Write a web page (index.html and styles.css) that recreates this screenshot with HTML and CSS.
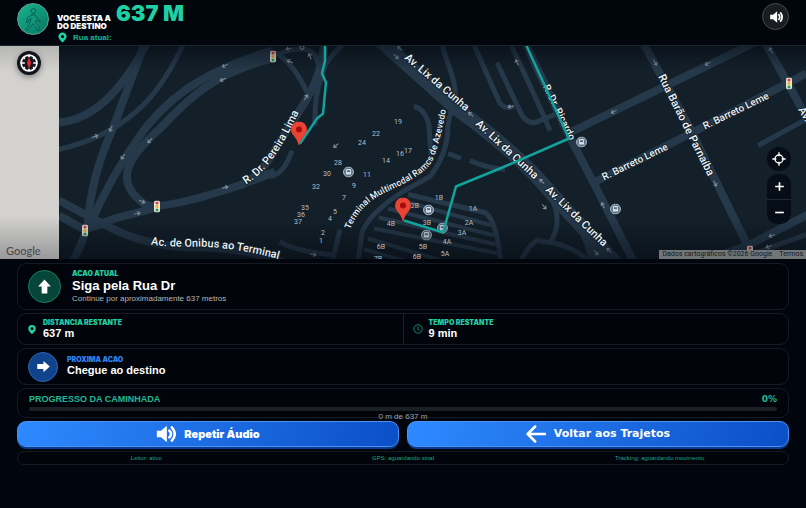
FILE: index.html
```html
<!DOCTYPE html>
<html lang="pt-BR">
<head>
  <meta charset="UTF-8">
  <meta name="viewport" content="width=device-width, initial-scale=1.0">
  <title>Navegação a pé</title>
  <link rel="stylesheet" href="styles.css">
</head>
<body>
  <header class="topbar">
    <div class="avatar">
      <svg viewBox="0 0 32 32" aria-hidden="true">
        <circle cx="16.500" cy="7.500" r="2.600"/>
        <path d="M14 12 L18 11.500 L20.500 15.500 L24 17.500 L23.500 19 L19 17.200 L18.500 20 L21.500 23 L23 28 L21 28.500 L19 24 L15.500 21 L13.500 25 L9.500 28 L8.500 26.500 L11.500 23.500 L14 15.500 L11.500 17 L10.500 20 L9 19.500 L10 15 Z"/>
      </svg>
    </div>
    <div class="heading">
      <div class="heading-main">
        <h1>VOCE ESTA A<br>DO DESTINO</h1>
        <strong class="distance">637 M</strong>
      </div>
      <p class="street">
        <svg class="pin" viewBox="0 0 24 24" aria-hidden="true"><path fill-rule="evenodd" d="M12 1a9 9 0 0 0-9 9c0 6 9 13 9 13s9-7 9-13a9 9 0 0 0-9-9zm0 5.500a3.500 3.500 0 1 1 0 7 3.500 3.500 0 0 1 0-7z"/></svg>
        Rua atual:
      </p>
    </div>
    <button class="sound" type="button" aria-label="Som">
      <svg viewBox="0 0 24 24" aria-hidden="true"><path class="fill" d="M2 8h5l7-6v20l-7-6H2z"/><path class="line" d="M17 8q3 4 0 8M20 5q5 7 0 14"/></svg>
    </button>
  </header>

  <main>
    <section class="map" aria-label="Mapa">
      <svg class="map-canvas" viewBox="0 45 806 214" preserveAspectRatio="xMidYMid slice">
        <defs>
          <symbol id="light" viewBox="0 0 6 12"><rect width="6" height="12" rx="2" fill="#e8e6dc"/><circle cx="3" cy="2.500" r="1.600" fill="#e0453a"/><circle cx="3" cy="6" r="1.600" fill="#f2b32c"/><circle cx="3" cy="9.500" r="1.600" fill="#2f9d58"/></symbol>
          <symbol id="bus" viewBox="0 0 12 12"><circle cx="6" cy="6" r="5.400" fill="#5d7182" stroke="#b7c8d6"/><rect x="3.200" y="2.800" width="5.600" height="6" rx="1" fill="#d5e3ee"/><rect x="4.200" y="4" width="3.600" height="2.200" fill="#5d7182"/></symbol>
          <symbol id="marker" viewBox="0 0 16 24"><path d="M8 0a8 8 0 0 0-8 8c0 6 6 7 7.500 15.500h1C10 15 16 14 16 8a8 8 0 0 0-8-8z" fill="#ea4335"/><circle cx="8" cy="8" r="3" fill="#a50e0e"/></symbol>
          <path id="arrow" d="M-3 0H3M0.500 -2L3 0L0.500 2"/>
          <linearGradient id="shade" x1="0" y1="0" x2="0" y2="1"><stop offset="0" stop-color="#02060e" stop-opacity=".5"/><stop offset=".12" stop-color="#02060e" stop-opacity="0"/><stop offset=".8" stop-color="#02060e" stop-opacity="0"/><stop offset="1" stop-color="#02060e" stop-opacity=".5"/></linearGradient>
          <path id="pereira" d="M246 184Q262 174 275 155T303 103"/>
          <path id="onibus" d="M151 244Q170 247 200 246Q245 248 290 262"/>
          <path id="terminal" d="M350 229Q359 205 385 192Q427 174 433 159Q441 138 447 104"/>
          <path id="lix1" d="M404 58L476 120"/>
          <path id="lix2" d="M475 124L543 187"/>
          <path id="lix3" d="M545 190L612 255"/>
          <path id="ricardo" d="M543 86L576 153"/>
          <path id="barao" d="M658 76L720 200"/>
        </defs>
        <rect y="45" width="806" height="214" fill="#13202a"/>
        <g class="roads">
          <g class="thin">
            <path d="M184 42Q162 90 135 112Q105 138 59 149"/>
            <path d="M442 42C446 65 458 78 455 105Q450 110 448 125Q448 153 430 176L403 191Q370 212 362 232L358 262"/>
            <path d="M414 106Q425 108 429 125L431 155"/>
            <path d="M346 42Q325 58 322 75Q314 95 315 125"/>
            <path d="M275 52Q294 62 309 96M275 55Q305 42 315 55L321 70"/>
            <path d="M473 42L500 103Q505 109 514 106M497 62L522 115Q530 126 540 120L560 112M510 42L540 107L550 130"/>
            <path d="M340 229L332 262M280 241Q292 250 335 255M270 176Q284 174 292 150"/>
            <path d="M408 194L485 212Q496 218 501 262"/>
            <path d="M540 180Q568 215 550 242M540 241Q570 242 590 262M520 262Q530 241 540 239"/>
            <path d="M448 153L461 158M470 160Q485 167 505 169M758 145L806 119M730 262L806 234"/>
          </g>
          <path class="platforms" d="M401 200L492 225M388 208L494 235M379 217L496 244M374 228L498 253M368 238L448 262M364 249L410 262"/>
          <g class="mid">
            <path d="M147 42Q108 118 59 122M145 42L112 130Q91 177 88 222Q84 240 72 262"/>
            <path d="M272 50C190 75 165 105 145 128Q112 173 90 224"/>
            <path d="M272 58C205 75 180 108 160 128C130 155 111 180 145 204Q154 209 200 197Q238 187 275 171M59 215L84 229Q98 225 115 218L157 207"/>
            <path d="M59 200L110 227Q150 248 205 247Q245 248 285 262"/>
            <path d="M324 42Q322 75 304 103L270 157Q258 177 240 185"/>
            <path d="M525 42L570 137L596 187L634 262M643 42L691 130L748 246"/>
            <path d="M755 42L570 132M806 73L720 118L594 182M765 42L810 123"/>
            <path d="M700 262L750 244L810 213"/>
          </g>
          <path class="wide" d="M380 40L455 107Q518 153 548 189Q575 220 616 262"/>
          <path d="M560 200Q580 222 590 262H616Z" class="patch"/>
        </g>
        <g class="arrows">
          <use href="#arrow" transform="translate(225 65) rotate(155)"/><use href="#arrow" transform="translate(223 79) rotate(155)"/>
          <use href="#arrow" transform="translate(111 128) rotate(115)"/><use href="#arrow" transform="translate(95 136) rotate(-18)"/>
          <use href="#arrow" transform="translate(123 156) rotate(125)"/><use href="#arrow" transform="translate(150 140) rotate(135)"/>
          <use href="#arrow" transform="translate(142 201) rotate(25)"/><use href="#arrow" transform="translate(137 213) rotate(-12)"/>
          <use href="#arrow" transform="translate(225 187) rotate(-15)"/><use href="#arrow" transform="translate(289 48) rotate(170)"/>
          <use href="#arrow" transform="translate(290 61) rotate(205)"/><use href="#arrow" transform="translate(310 56) rotate(-115)"/>
          <use href="#arrow" transform="translate(306 97) rotate(-60)"/><use href="#arrow" transform="translate(336 145) rotate(140)"/>
          <use href="#arrow" transform="translate(400 48) rotate(-140)"/><use href="#arrow" transform="translate(396 56) rotate(42)"/>
          <use href="#arrow" transform="translate(471 114) rotate(-140)"/><use href="#arrow" transform="translate(517 62) rotate(-115)"/>
          <use href="#arrow" transform="translate(511 106) rotate(170)"/><use href="#arrow" transform="translate(542 181) rotate(-135)"/>
          <use href="#arrow" transform="translate(544 206) rotate(50)"/><use href="#arrow" transform="translate(596 252) rotate(50)"/>
          <use href="#arrow" transform="translate(609 250) rotate(-135)"/><use href="#arrow" transform="translate(603 205) rotate(-115)"/>
          <use href="#arrow" transform="translate(614 111) rotate(153)"/><use href="#arrow" transform="translate(708 63) rotate(153)"/>
          <use href="#arrow" transform="translate(655 62) rotate(62)"/><use href="#arrow" transform="translate(715 183) rotate(62)"/>
          <use href="#arrow" transform="translate(771 50) rotate(-118)"/><use href="#arrow" transform="translate(772 235) rotate(160)"/>
          <use href="#arrow" transform="translate(769 246) rotate(160)"/><use href="#arrow" transform="translate(313 254) rotate(10)"/>
        </g>
        <use href="#bus" x="343" y="166" width="11" height="11"/><use href="#bus" x="423" y="204" width="11" height="11"/><use href="#bus" x="437" y="222" width="11" height="11"/><use href="#bus" x="421" y="229" width="11" height="11"/><use href="#bus" x="576" y="136" width="11" height="11"/><use href="#bus" x="610" y="203" width="11" height="11"/>
        <use href="#light" x="270" y="50" width="6" height="12"/><use href="#light" x="154" y="200" width="6" height="12"/><use href="#light" x="82" y="224" width="6" height="12"/><use href="#light" x="786" y="77" width="6" height="12"/><use href="#light" x="747" y="245" width="6" height="12"/>
        <circle cx="302" cy="47" r="2" fill="none" stroke="#a9b4bd"/>
        <rect y="45" width="806" height="214" fill="url(#shade)"/>
        <g class="road-names">
          <text><textPath href="#pereira">R. Dr. Pereira Lima</textPath></text>
          <text><textPath href="#onibus">Ac. de Onibus ao Terminal</textPath></text>
          <text class="tiny"><textPath href="#terminal">Terminal Multimodal Ramos de Azevedo</textPath></text>
          <text><textPath href="#lix1">Av. Lix da Cunha</textPath></text>
          <text><textPath href="#lix2">Av. Lix da Cunha</textPath></text>
          <text><textPath href="#lix3">Av. Lix da Cunha</textPath></text>
          <text class="small"><textPath href="#ricardo">R. Dr. Ricardo</textPath></text>
          <text><textPath href="#barao">Rua Barão de Parnaíba</textPath></text>
          <text class="small" transform="translate(604 180) rotate(-26)">R. Barreto Leme</text>
          <text class="small" transform="translate(705 129) rotate(-26)">R. Barreto Leme</text>
          <text transform="translate(798 109) rotate(60)">Av.</text>
        </g>
        <g class="stops">
          <text x="398" y="123">19</text><text x="376" y="135">22</text><text x="362" y="144">24</text><text x="400" y="155">16</text><text x="408" y="152">17</text><text x="386" y="162">14</text><text x="338" y="164">28</text><text x="367" y="176">11</text><text x="327" y="175">30</text><text x="354" y="187">9</text><text x="316" y="188">32</text><text x="344" y="199">7</text><text x="305" y="209">35</text><text x="335" y="213">5</text><text x="301" y="216">36</text><text x="330" y="220">4</text><text x="298" y="223">37</text><text x="323" y="234">2</text><text x="321" y="242">1</text>
          <text x="439" y="199">1B</text><text x="415" y="207">2B</text><text x="427" y="224">3B</text><text x="391" y="225">4B</text><text x="423" y="248">5B</text><text x="381" y="248">6B</text><text x="378" y="260">7B</text><text x="417" y="258">6B</text><text x="473" y="210">1A</text><text x="469" y="224">2A</text><text x="462" y="234">3A</text><text x="447" y="243">4A</text><text x="445" y="255">5A</text>
        </g>
        <path class="route" d="M325 42V60L322 73L326 82L323 113L317 118L300 143M525 42L569 138L500 168L456 186L443 232L404 220"/>
        <use href="#marker" x="291" y="121" width="16" height="24"/><use href="#marker" x="395" y="197" width="16" height="24"/>
      </svg>
      <div class="map-side">
        <button class="round compass" type="button" aria-label="Bússola">
          <svg viewBox="0 0 24 24" aria-hidden="true"><circle cx="12" cy="12" r="9.500"/><path d="M12 2v3M12 19v3M2 12h5M17 12h5M5 5l2 2M19 5l-2 2M5 19l2-2M19 19l-2-2"/><path class="north" d="M12 5l2.500 7-2.500 7-2.500-7z"/></svg>
        </button>
        <span class="google">Google</span>
      </div>
      <div class="map-controls">
        <button class="round" type="button" aria-label="Minha localização">
          <svg viewBox="0 0 24 24" aria-hidden="true"><circle cx="12" cy="12" r="6"/><path d="M12 2v6M12 16v6M2 12h6M16 12h6"/></svg>
        </button>
        <div class="zoom">
          <button type="button" aria-label="Aproximar"><svg viewBox="0 0 24 24" aria-hidden="true"><path d="M12 4v16M4 12h16"/></svg></button>
          <button type="button" aria-label="Afastar"><svg viewBox="0 0 24 24" aria-hidden="true"><path d="M4 12h16"/></svg></button>
        </div>
      </div>
      <div class="credits"><span>Dados cartográficos ©2026 Google</span><a href="#termos">Termos</a></div>
    </section>

    <div class="panels">
      <section class="card current">
        <span class="badge green"><svg viewBox="0 0 24 24" aria-hidden="true"><path d="M12 2l9 10h-5v10H8V12H3z"/></svg></span>
        <div>
          <h2 class="label">ACAO ATUAL</h2>
          <p class="action">Siga pela Rua Dr</p>
          <p class="hint">Continue por aproximadamente 637 metros</p>
        </div>
      </section>

      <section class="card stats">
        <div class="stat">
          <svg class="pin" viewBox="0 0 24 24" aria-hidden="true"><path fill-rule="evenodd" d="M12 1a9 9 0 0 0-9 9c0 6 9 13 9 13s9-7 9-13a9 9 0 0 0-9-9zm0 5.500a3.500 3.500 0 1 1 0 7 3.500 3.500 0 0 1 0-7z"/></svg>
          <div><h2 class="label">DISTANCIA RESTANTE</h2><p class="value">637 m</p></div>
        </div>
        <div class="stat">
          <svg class="clock" viewBox="0 0 24 24" aria-hidden="true"><circle cx="12" cy="12" r="10"/><path d="M12 6v7l4 2"/></svg>
          <div><h2 class="label">TEMPO RESTANTE</h2><p class="value">9 min</p></div>
        </div>
      </section>

      <section class="card next">
        <span class="badge blue"><svg viewBox="0 0 24 24" aria-hidden="true"><path d="M22 12l-10 9v-5H2V8h10V3z"/></svg></span>
        <div>
          <h2 class="label">PROXIMA ACAO</h2>
          <p class="value">Chegue ao destino</p>
        </div>
      </section>

      <section class="card progress">
        <div class="progress-head"><label for="walk">PROGRESSO DA CAMINHADA</label><span class="percent">0%</span></div>
        <progress id="walk" value="0" max="637"></progress>
        <p class="progress-text">0 m de 637 m</p>
      </section>

      <div class="actions">
        <button class="primary" type="button">
          <svg viewBox="0 0 24 24" aria-hidden="true"><path class="fill" d="M1 8h5l7-6v20l-7-6H1z"/><path class="line" d="M16 8q4 4 0 8M19 4q7 8 0 16"/></svg>
          Repetir Áudio
        </button>
        <button class="primary back" type="button">
          <svg viewBox="0 0 24 24" aria-hidden="true"><path class="line" d="M23 12H3M11 3l-9 9 9 9"/></svg>
          Voltar aos Trajetos
        </button>
      </div>

      <footer class="card status">
        <span>Leitor: ativo</span>
        <span>GPS: aguardando sinal</span>
        <span>Tracking: aguardando movimento</span>
      </footer>
    </div>
  </main>
</body>
</html>
```

FILE: styles.css
```css
* {
  box-sizing: border-box;
}
body {
  margin: 0;
  min-height: 100vh;
  background-color: #01060e;
  color: #ffffff;
  font-family: "Liberation Sans", Arial, sans-serif;
}
h1, h2, p {
  margin: 0;
}
button {
  display: flex;
  align-items: center;
  justify-content: center;
  padding: 0;
  border: 0;
  color: #ffffff;
  cursor: pointer;
}

/* header */
.topbar {
  display: flex;
  align-items: flex-start;
  height: 46px;
  padding: 3px 17px 0;
  background-color: #01060d;
  border-bottom: 1px solid #1b252c;
}
.avatar {
  width: 32px;
  height: 32px;
  border: 1px solid #63a394;
  border-radius: 50%;
  background: linear-gradient(135deg, #18b48f, #087661);
}
.avatar svg {
  display: block;
  fill: #12977c;
  stroke: #075c50;
  stroke-width: 1;
}
.heading {
  flex: 1;
  margin-left: 8px;
}
.heading-main {
  display: flex;
  align-items: flex-end;
  gap: 5px;
  height: 27px;
}
h1 {
  font: 900 8px/8px Inter, sans-serif;
}
.distance {
  align-self: flex-start;
  color: #20cfa4;
  font: 900 22px/21px Inter, sans-serif;
}
.street {
  display: flex;
  align-items: center;
  gap: 5px;
  color: #17b493;
  font-size: 8px;
  font-weight: bold;
  line-height: 15px;
}
.pin {
  width: 11px;
  height: 11px;
  fill: #20cfa4;
}
.sound {
  width: 27px;
  height: 27px;
  border: 1px solid #484c52;
  border-radius: 50%;
  background-color: #191c21;
}
.sound svg {
  width: 14px;
}
.fill {
  fill: #ffffff;
}
.line {
  fill: none;
  stroke: #ffffff;
  stroke-width: 3;
  stroke-linecap: round;
  stroke-linejoin: round;
}

/* map */
.map {
  position: relative;
  height: 213px;
  overflow: hidden;
}
.map-canvas {
  display: block;
  width: 100%;
  height: 100%;
}
.roads path {
  fill: none;
  stroke: #26394a;
  stroke-linejoin: round;
}
.roads .thin path {
  stroke-width: 5;
}
.roads .platforms {
  stroke-width: 4;
}
.roads .mid path {
  stroke-width: 8;
}
.roads .wide {
  stroke-width: 14;
}
.roads .patch {
  fill: #26394a;
}
.arrows {
  fill: none;
  stroke: #8292a0;
  stroke-width: 1;
}
.road-names {
  fill: #edf2f6;
  stroke: #13202a;
  stroke-width: 2;
  paint-order: stroke;
  font: 500 11px Roboto, sans-serif;
}
.road-names .small {
  font-size: 10px;
}
.road-names .tiny {
  font-size: 9px;
}
.stops {
  fill: #b4bec7;
  font: 7px Roboto, sans-serif;
  text-anchor: middle;
}
.route {
  fill: none;
  stroke: #12a39c;
  stroke-width: 2.500;
}
.map-side {
  position: absolute;
  inset: 0 auto 0 0;
  display: flex;
  flex-direction: column;
  justify-content: space-between;
  width: 59px;
  padding: 5px 6px 1px;
  background: linear-gradient(#b5b5b3, #d3d2cf 12%, #d3d2cf 80%, #99999a);
}
.round {
  width: 24px;
  height: 24px;
  border-radius: 50%;
  background-color: #070d16;
}
.round svg, .zoom svg {
  width: 16px;
  fill: none;
  stroke: #ffffff;
  stroke-width: 2;
}
.compass {
  margin-left: 11px;
  background-color: #11151c;
  box-shadow: 0 2px 6px #00000066;
}
.compass svg {
  width: 20px;
}
.compass .north {
  fill: #e02b35;
  stroke: none;
}
.google {
  color: #4a4b4f;
  font: 500 11px/14px Lato, sans-serif;
}
.map-controls {
  position: absolute;
  right: 15px;
  bottom: 35px;
  display: grid;
  gap: 3px;
}
.zoom {
  border-radius: 10px;
  background-color: #070d16;
}
.zoom button {
  width: 24px;
  height: 25px;
  background: none;
}
.zoom button + button {
  border-top: 1px solid #222a33;
}
.zoom svg {
  width: 13px;
  stroke-width: 3;
}
.credits {
  position: absolute;
  right: 0;
  bottom: 0;
  display: flex;
  gap: 7px;
  padding: 0 3px;
  background-color: #737678;
  color: #11161a;
  font: 7px/9px Roboto, sans-serif;
}
.credits a {
  color: inherit;
  text-decoration: none;
}

/* panels */
.panels {
  display: grid;
  gap: 3px;
  padding: 4px 17px 0;
}
.card {
  display: flex;
  align-items: center;
  border: 1px solid #151b21;
  border-radius: 9px;
  background-color: #01050b;
}
.current {
  gap: 11px;
  height: 47px;
  padding: 0 10px;
}
.badge {
  display: flex;
  align-items: center;
  justify-content: center;
  border-radius: 50%;
}
.badge svg {
  width: 17px;
  fill: #ffffff;
}
.green {
  width: 33px;
  height: 33px;
  border: 1px solid #16805f;
  background-color: #06463a;
}
.blue {
  width: 30px;
  height: 30px;
  border: 1px solid #2968b8;
  background-color: #10438a;
}
.blue svg {
  width: 15px;
}
.label {
  color: #20cfa4;
  font: 900 7px/8px Inter, sans-serif;
}
.action {
  font-size: 13px;
  font-weight: bold;
  line-height: 16px;
}
.hint {
  color: #b3b6ba;
  font-size: 8px;
  line-height: 9px;
}
.value {
  font-size: 11px;
  font-weight: bold;
  line-height: 13px;
}
.stats {
  height: 32px;
}
.stat {
  display: flex;
  flex: 1;
  align-items: center;
  align-self: stretch;
  gap: 6px;
  padding: 0 9px;
}
.stat + .stat {
  border-left: 1px solid #1b2127;
}
.stat .pin, .clock {
  width: 10px;
}
.clock {
  fill: none;
  stroke: #17a483;
  stroke-width: 2;
}
.next {
  gap: 9px;
  height: 37px;
  padding: 0 10px;
}
.next .label {
  color: #2d83f6;
}
.progress {
  display: block;
  height: 30px;
  padding: 4px 11px 0;
  color: #20b894;
}
.progress-head {
  display: flex;
  justify-content: space-between;
  font-size: 9px;
  font-weight: bold;
  line-height: 13px;
}
.percent {
  font-family: "DejaVu Sans", sans-serif;
}
progress {
  display: block;
  width: 100%;
  height: 4px;
  margin-top: 1px;
  border: 0;
  border-radius: 2px;
  overflow: hidden;
  appearance: none;
  background-color: #1b2025;
}
progress::-webkit-progress-bar {
  background-color: #1b2025;
}
progress::-webkit-progress-value {
  background-color: #20cfa4;
}
.progress-text {
  color: #9da1a6;
  font-size: 8px;
  line-height: 12px;
  text-align: center;
}
.actions {
  display: grid;
  grid-template-columns: 1fr 1fr;
  gap: 8px;
}
.primary {
  gap: 8px;
  height: 26px;
  margin-bottom: 1px;
  border: 1px solid #4d92f1;
  border-radius: 9px;
  background: linear-gradient(110deg, #2f8aff, #0b4fc7);
  box-shadow: 0 2px 0 #073b91;
  font: 900 11px/14px Inter, sans-serif;
}
.primary svg {
  width: 20px;
}
.back {
  font-family: "DejaVu Sans", sans-serif;
}
.status {
  justify-content: space-around;
  height: 14px;
  color: #17a483;
  font-size: 6px;
  line-height: 12px;
}
.status span {
  flex: 1;
  text-align: center;
}
```
